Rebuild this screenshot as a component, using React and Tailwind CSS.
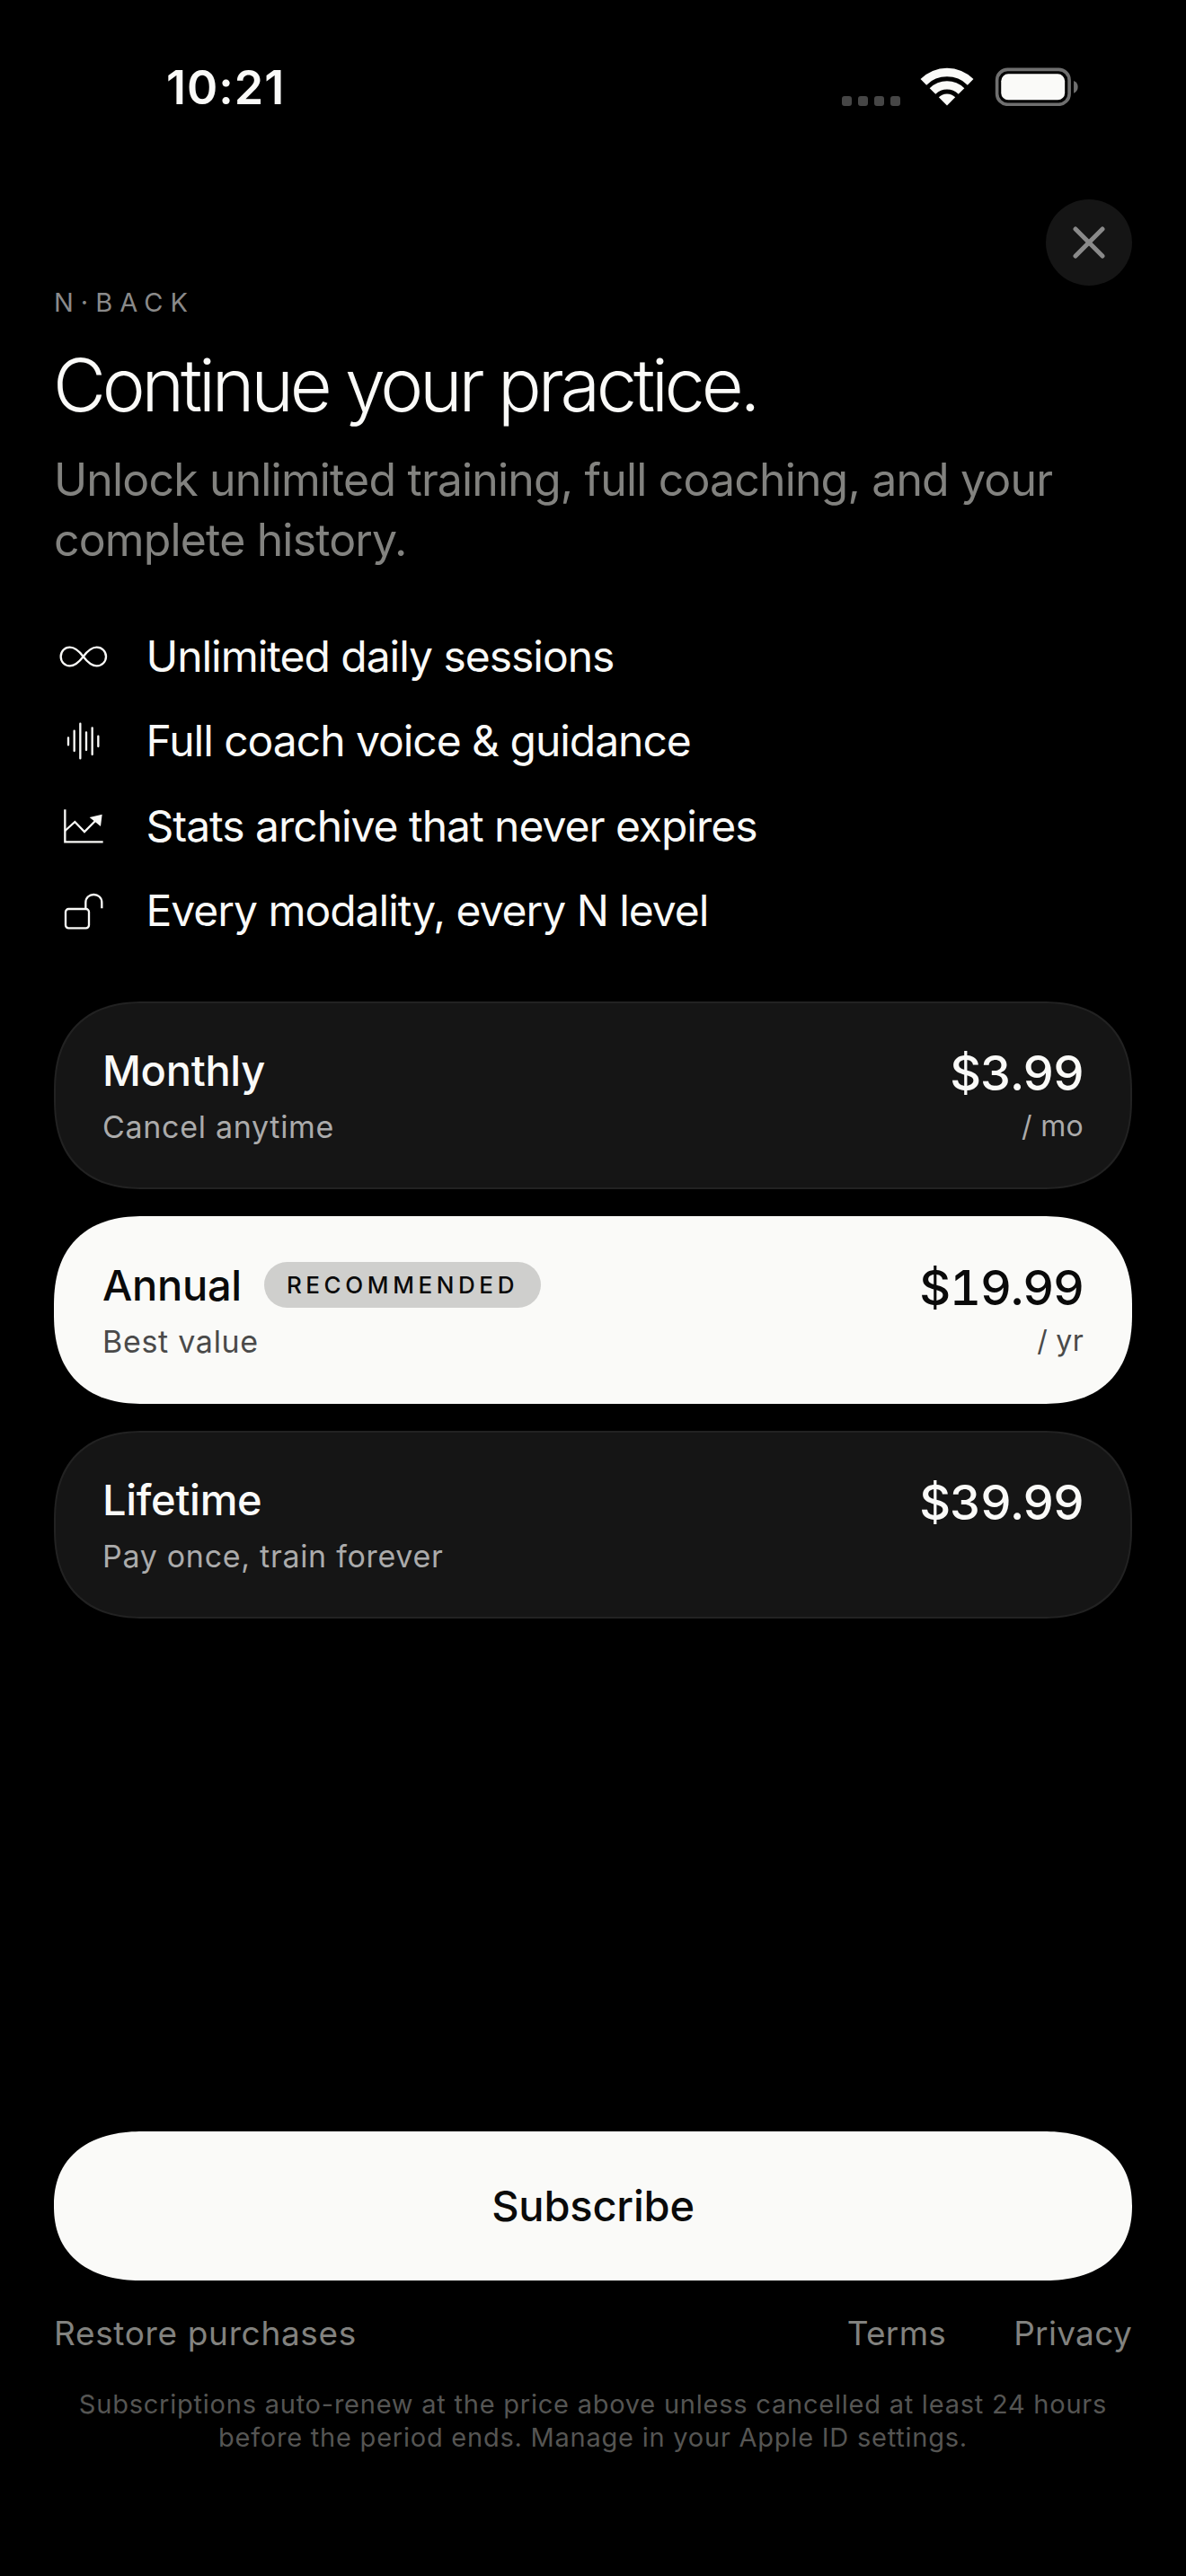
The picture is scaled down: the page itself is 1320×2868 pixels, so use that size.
const font = { fontFamily: "Inter, 'Liberation Sans', sans-serif" };

function Wifi() {
  return (
    <svg width="60" height="43" viewBox="430 105 180 128" fill="#fafaf8">
      <path d="M431.6 143.6A125 125 0 0 1 608.4 143.6L588.6 163.4A97 97 0 0 0 451.4 163.4Z" />
      <path d="M462 174A82 82 0 0 1 578 174L558.2 193.8A54 54 0 0 0 481.8 193.8Z" />
      <path d="M492.4 204.4A39 39 0 0 1 547.6 204.4L520 232Z" />
    </svg>
  );
}

function Battery() {
  return (
    <svg width="94" height="44" viewBox="670 100 285 133">
      <rect x="681" y="110" width="244" height="118" rx="36" fill="none" stroke="#6f6f6f" strokeWidth="11" />
      <rect x="695" y="125" width="215" height="88" rx="24" fill="#fafaf8" />
      <path d="M940 148C950 152 954 160 954 169C954 178 950 186 940 190Z" fill="#6f6f6f" />
    </svg>
  );
}

function Cells() {
  return (
    <div className="flex gap-[7px]">
      {[0, 1, 2, 3].map((i) => (
        <div key={i} className="h-[11px] w-[11px] rounded-[3px] bg-[#464646]" />
      ))}
    </div>
  );
}

function InfinityIcon() {
  return (
    <svg width="66" height="66" viewBox="60 55 198 198" fill="none" stroke="#fafaf8" strokeWidth="7">
      <path d="M158 154C140 130 125 123 113 123C95 123 83 137 83 154C83 171 95 185 113 185C125 185 140 178 158 154C176 130 191 123 203 123C221 123 234 137 234 154C234 171 221 185 203 185C191 185 176 178 158 154Z" />
    </svg>
  );
}

function WaveIcon() {
  return (
    <svg width="66" height="66" viewBox="60 338 198 198" fill="none" stroke="#fafaf8" strokeWidth="7" strokeLinecap="round">
      <path d="M108 426V450M128 403V470M148 379V495M168 408V467M188 393V482M208 421V455" />
    </svg>
  );
}

function ChartIcon() {
  return (
    <svg width="66" height="66" viewBox="60 621 198 198" fill="none" stroke="#fafaf8" strokeWidth="7">
      <path d="M97 664V772H224" />
      <path d="M97 735L130 705L162 738L198 702" />
      <path d="M221 680L179 690L216 720Z" fill="#fafaf8" stroke="none" />
    </svg>
  );
}

function LockIcon() {
  return (
    <svg width="66" height="66" viewBox="60 901 198 198" fill="none" stroke="#fafaf8" strokeWidth="7">
      <rect x="99" y="994" width="78" height="64" rx="10" />
      <path d="M166 992V973C166 955 179 946 193 946C207 946 220 955 220 973V992" />
    </svg>
  );
}

const features = [
  [InfinityIcon, "Unlimited daily sessions"],
  [WaveIcon, "Full coach voice & guidance"],
  [ChartIcon, "Stats archive that never expires"],
  [LockIcon, "Every modality, every N level"],
];

function Plan({ title, sub, price, per, selected }) {
  return (
    <div
      className={
        "flex h-[209px] items-start justify-between rounded-[100px] border-2 px-[52px] pt-[44px] [corner-shape:superellipse(1.25)] " +
        (selected ? "border-[#fafaf8] bg-[#fafaf8]" : "border-[#222222] bg-[#151515]")
      }
    >
      <div>
        <div className="flex h-[62px] items-center">
          <span className={"text-[47px] leading-[62px] font-[450] tracking-[-0.3px] " + (selected ? "text-[#0a0a0a]" : "text-[#fafaf8]")}>
            {title}
          </span>
          {selected && (
            <span className="ml-[25px] flex h-[51px] items-center rounded-full bg-[#cfcfcd] px-[25px] text-[26px] font-medium tracking-[4.6px] text-[#0a0a0a]">
              RECOMMENDED
            </span>
          )}
        </div>
        <div className={"mt-[8px] text-[34px] leading-[48px] tracking-[0.7px] " + (selected ? "text-[#4a4a4a]" : "text-[#ababab]")}>{sub}</div>
      </div>
      <div className="pt-[3px] text-right">
        <div className={"h-[62px] text-[54px] leading-[62px] font-[450] tracking-[-1.1px] tabular-nums " + (selected ? "text-[#0a0a0a]" : "text-[#fafaf8]")}>{price}</div>
        {per && <div className={"mt-[4px] text-[32px] leading-[48px] tracking-[0.3px] " + (selected ? "text-[#4a4a4a]" : "text-[#ababab]")}>{per}</div>}
      </div>
    </div>
  );
}

export default function App() {
  return (
    <div className="relative flex h-[2868px] w-[1320px] flex-col overflow-hidden bg-black" style={font}>
      <div className="flex h-[194px] items-start justify-between pt-[61px] pr-[120px] pl-[185px]">
        <div className="text-[52px] leading-[74px] font-semibold tracking-[1px] text-[#fafaf8]">10:21</div>
        <div className="flex items-end pt-[13px]">
          <Cells />
          <div className="ml-[22px]"><Wifi /></div>
          <div className="ml-[22px]"><Battery /></div>
        </div>
      </div>
      <button className="absolute top-[222px] right-[60px] flex h-[96px] w-[96px] items-center justify-center rounded-full bg-[#151515]">
        <svg width="36" height="36" viewBox="0 0 36 36" stroke="#8a8a8a" strokeWidth="5" strokeLinecap="round">
          <path d="M3 3L33 33M33 3L3 33" />
        </svg>
      </button>

      <div className="flex flex-1 flex-col px-[60px]">
        <div className="mt-[123px] text-[29px] leading-[40px] tracking-[8px] text-[#8a8a8a]">N·BACK</div>
        <h1 className="mt-[22px] -ml-[1px] text-[81px] leading-[100px] font-light tracking-[-4.2px] text-[#fafaf8]">Continue your practice.</h1>
        <p className="mt-[22px] text-[50px] leading-[67px] tracking-[-0.85px] text-[#82827f]">
          Unlock unlimited training, full coaching, and your complete history.
        </p>
        <div className="mt-[63px] flex flex-col gap-[28.3px]">
          {features.map(([Icon, label]) => (
            <div key={label} className="flex h-[66px] items-center gap-[36.5px]">
              <Icon />
              <span className="text-[48px] leading-[66px] tracking-[-1.03px] text-[#fafaf8]">{label}</span>
            </div>
          ))}
        </div>
        <div className="mt-[68px] flex flex-col gap-[30px]">
          <Plan title="Monthly" sub="Cancel anytime" price="$3.99" per="/ mo" />
          <Plan title="Annual" sub="Best value" price="$19.99" per="/ yr" selected />
          <Plan title="Lifetime" sub="Pay once, train forever" price="$39.99" />
        </div>
        <div className="flex-1" />
        <button className="flex h-[166px] items-center justify-center rounded-[99px/83px] bg-[#fafaf8] text-[47px] font-[450] tracking-[-0.2px] text-[#0a0a0a] [corner-shape:superellipse(1.2)]">
          Subscribe
        </button>
        <div className="mt-[33px] flex justify-between text-[37px] leading-[52px] text-[#82827f]">
          <span className="tracking-[0.65px]">Restore purchases</span>
          <div className="flex gap-[75px] tracking-[0.3px]">
            <span>Terms</span>
            <span>Privacy</span>
          </div>
        </div>
        <p className="mt-[34px] mb-[136px] text-center text-[29px] leading-[37px] tracking-[0.77px] text-[#555553]">
          Subscriptions auto-renew at the price above unless cancelled at least 24 hours
          <br />
          before the period ends. Manage in your Apple ID settings.
        </p>
      </div>
    </div>
  );
}
